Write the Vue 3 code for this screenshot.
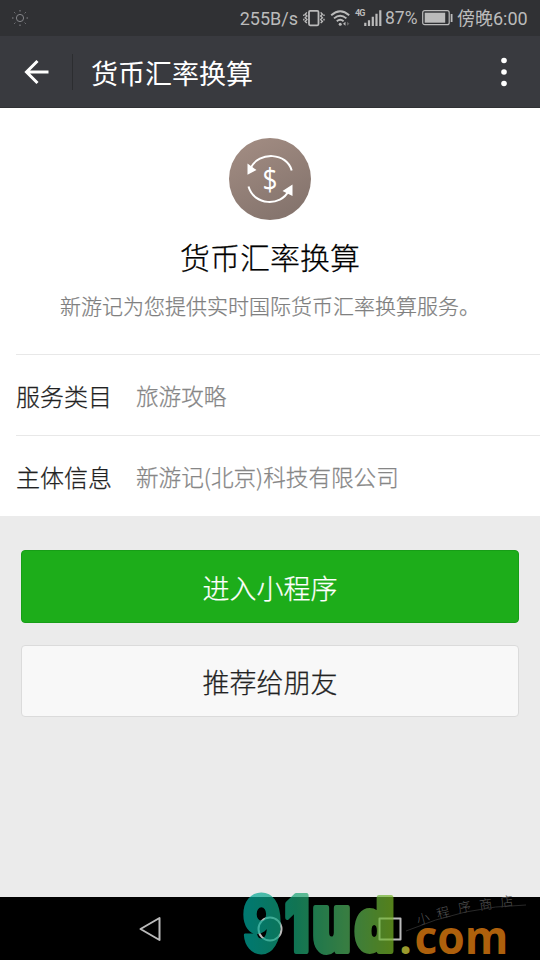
<script setup>
const rows = [
  { label: '服务类目', value: '旅游攻略' },
  { label: '主体信息', value: '新游记(北京)科技有限公司' },
]
</script>

<template>
  <div class="screen">
    <header class="status">
      <svg class="sun" width="18" height="18" viewBox="0 0 18 18">
        <circle cx="9" cy="9" r="3.6" />
        <path d="M9 1v1.5M9 15.5V17M1 9h1.5M15.5 9H17M3.3 3.3l1 1M13.7 13.7l1 1M3.3 14.7l1-1M13.7 4.3l1-1" />
      </svg>
      <span class="speed">255B/s</span>
      <svg class="vibrate" width="22" height="18" viewBox="0 0 22 18">
        <rect x="6" y="1.8" width="9.5" height="14.5" rx="1.2" stroke-width="1.8" />
        <path d="M3.9 3.4L2.2 5.3l1.7 1.7-1.7 1.8 1.7 1.8-1.7 1.8 1.7 1.7M.8 5.4v1.6M.8 9.8v1.6M17.7 3.4l1.7 1.9-1.7 1.7 1.7 1.8-1.7 1.8 1.7 1.8-1.7 1.7M21 5.4v1.6M21 9.8v1.6" stroke-width="1.4" />
      </svg>
      <svg class="wifi" width="21" height="18" viewBox="0 0 21 18">
        <path d="M1.2 6.2Q10.2-1.8 19.2 6.2M4 9.4Q10.2 4 16.4 9.4M6.8 12.3Q10.2 9.4 13.6 12.3" stroke-width="1.9" />
        <circle class="solid" cx="10.2" cy="15.3" r="1.5" />
        <path class="solid" d="M13 14.8l2.5-2v4z" />
        <path class="dim" d="M17 12.8l2.5 2-2.5 2z" />
      </svg>
      <span class="gen">4G</span>
      <svg class="signal" width="18" height="18" viewBox="0 0 18 18">
        <path d="M1.3 13.8V17M5 11.3V17M8.8 7.8V17M12.5 4.8V17M16.3 1.2V17" stroke-width="2.2" />
      </svg>
      <span class="percent">87%</span>
      <svg class="battery" width="31" height="16" viewBox="0 0 31 16">
        <rect x=".7" y=".7" width="26.5" height="14" rx="2" stroke-width="1.2" />
        <rect class="solid" x="2.7" y="2.7" width="20.5" height="10" />
        <path d="M29.6 4v8" stroke-width="1.8" />
      </svg>
      <span class="clock">傍晚6:00</span>
    </header>

    <nav class="bar">
      <svg class="back" width="26" height="26" viewBox="0 0 26 26">
        <path d="M24.5 13H2.5M13.5 2L2.5 13l11 11" />
      </svg>
      <i class="divider"></i>
      <h1>货币汇率换算</h1>
      <svg class="more" width="8" height="32" viewBox="0 0 8 32">
        <circle cx="4" cy="4.5" r="2.8" /><circle cx="4" cy="16" r="2.8" /><circle cx="4" cy="27.5" r="2.8" />
      </svg>
    </nav>

    <main>
      <section class="profile">
        <svg class="logo" width="82" height="82" viewBox="0 0 82 82">
          <defs>
            <linearGradient id="coin" x1="0" y1="0" x2=".5" y2="1">
              <stop offset="0" stop-color="#a48e84" /><stop offset="1" stop-color="#86756e" />
            </linearGradient>
          </defs>
          <circle cx="41" cy="41" r="41" fill="url(#coin)" />
          <path d="M62.7 32.5C58 14.5 30 13 21.5 30M19.5 48.5C25 68 52 68.5 59.5 53" fill="none" stroke="#fff" stroke-width="2" />
          <path d="M18.5 25.5v11.2l9-4.7zM63.5 46.5v11.5l-10-5z" fill="#fff" />
          <text x="33.5" y="52" textLength="15" lengthAdjust="spacingAndGlyphs">$</text>
        </svg>
        <h2>货币汇率换算</h2>
        <p>新游记为您提供实时国际货币汇率换算服务。</p>
      </section>

      <dl>
        <div v-for="row in rows" :key="row.label" class="row">
          <dt>{{ row.label }}</dt>
          <dd>{{ row.value }}</dd>
        </div>
      </dl>
    </main>

    <section class="actions">
      <button class="primary">进入小程序</button>
      <button class="plain">推荐给朋友</button>
    </section>

    <footer class="keys">
      <svg width="24" height="26" viewBox="0 0 24 26"><path d="M21.5 2v22L2.5 13z" /></svg>
      <svg width="26" height="26" viewBox="0 0 26 26"><circle cx="13" cy="13" r="11.5" /></svg>
      <svg width="24" height="24" viewBox="0 0 24 24"><rect x="1.5" y="1.5" width="21" height="21" /></svg>
    </footer>

    <svg class="watermark" width="300" height="72" viewBox="240 888 300 72">
      <defs>
        <linearGradient id="brand" gradientUnits="userSpaceOnUse" x1="243" y1="0" x2="393" y2="0">
          <stop offset="0" stop-color="#00aaa0" /><stop offset=".35" stop-color="#18a475" />
          <stop offset=".7" stop-color="#50b15c" /><stop offset="1" stop-color="#78b526" />
        </linearGradient>
      </defs>
      <g class="brand">
        <text class="nine" x="242.5" y="951.5" textLength="39" lengthAdjust="spacingAndGlyphs" font-size="78">9</text>
        <text x="285" y="951" textLength="24" lengthAdjust="spacingAndGlyphs" font-size="75">1</text>
        <text x="312.5" y="950.5" textLength="38" lengthAdjust="spacingAndGlyphs" font-size="78">u</text>
        <text x="355" y="950.5" textLength="39" lengthAdjust="spacingAndGlyphs" font-size="73">d</text>
      </g>
      <text class="com dot" x="399" y="953.5">.</text>
      <text class="com" x="414.5" y="953.5" textLength="94" lengthAdjust="spacingAndGlyphs">com</text>
      <g class="script">
        <text transform="translate(418 925) rotate(-15)">小</text>
        <text transform="translate(438 919) rotate(-14)">程</text>
        <text transform="translate(459 913) rotate(-12)">序</text>
        <text transform="translate(480 910) rotate(-8)">商</text>
        <text transform="translate(501 907) rotate(-8)">店</text>
      </g>
      <path d="M406 931Q465 906 526 905" fill="none" stroke="#343434" stroke-width=".8" />
    </svg>
  </div>
</template>

<style>
body { margin: 0; overflow: hidden; }
</style>

<style scoped>
.screen {
  position: relative;
  display: flex;
  flex-direction: column;
  width: 540px;
  height: 960px;
  overflow: hidden;
  background: #ebebeb;
  font-family: "Noto Sans CJK SC", sans-serif;
  font-weight: 300;
}
svg { display: block; flex: none; }
h1, h2, p, dl, dt, dd { margin: 0; font-weight: 300; }
h2, p, dt, dd, button { -webkit-text-stroke: .25px currentColor; }
.status {
  display: flex;
  align-items: center;
  box-sizing: border-box;
  height: 36px;
  padding: 0 12px 0 11px;
  background: #303134;
  color: #bbb;
  font-family: Roboto, "Noto Sans CJK SC", sans-serif;
  font-size: 18px;
  font-weight: 400;
  line-height: 37px;
  white-space: nowrap;
}
.status svg { fill: none; stroke: #bbb; }
.status .solid { fill: #bbb; stroke: none; }
.status .dim { fill: #666; stroke: none; }
.status .sun { stroke: #85868a; }
.speed { margin-left: auto; }
.vibrate { margin-left: 5px; }
.wifi { margin-left: 5px; }
.gen { align-self: flex-start; margin-left: 4px; width: 10px; font-size: 9px; font-weight: 700; line-height: 27px; letter-spacing: -.8px; }
.signal { margin-left: -1px; }
.percent { margin-left: 3px; width: 33px; font-size: 17.5px; }
.battery { margin-left: 4px; }
.clock { margin-left: 4px; width: 71px; }
.bar {
  display: flex;
  align-items: center;
  box-sizing: border-box;
  height: 72px;
  padding: 0 32px 0 24px;
  border-bottom: 1px solid #303134;
  background: #393a3f;
  color: #fff;
}
.back { fill: none; stroke: #fff; stroke-width: 3; }
.divider { width: 1px; height: 36px; margin: 0 18px 0 22px; background: #2c2d30; }
.bar h1 { padding-top: 2px; font-size: 27px; font-weight: 400; line-height: 40px; }
.more { margin-left: auto; fill: #fff; }
main { height: 408px; background: #fff; }
.profile {
  display: flex;
  flex-direction: column;
  align-items: center;
  box-sizing: border-box;
  height: 246px;
  padding-top: 30px;
}
.logo text { fill: #fff; font: 400 31px "Open Sans", sans-serif; }
.profile h2 { margin-top: 16px; color: #000; font-size: 30px; line-height: 40px; }
.profile p { margin-top: 14px; color: #808080; font-size: 21px; line-height: 30px; }
.row {
  display: flex;
  align-items: center;
  box-sizing: border-box;
  height: 81px;
  margin-left: 16px;
  border-top: 1px solid #e8e8e8;
}
dt { width: 120px; color: #222; font-size: 24px; }
dd { color: #868686; font-size: 22.6px; }
.actions { display: flex; flex-direction: column; gap: 22px; padding: 34px 21px 0; }
button {
  box-sizing: border-box;
  height: 73px;
  padding: 1px 0 0;
  border: 1px solid #179e17;
  border-radius: 4px;
  background: #1dad1a;
  color: #fff;
  font: 300 27px "Noto Sans CJK SC", sans-serif;
}
.plain { height: 72px; border-color: #dbdbdb; background: #f8f8f8; color: #222; }
.keys {
  display: flex;
  align-items: center;
  justify-content: center;
  gap: 95px;
  height: 63px;
  margin-top: auto;
  background: #000;
}
.keys svg { fill: none; stroke: #bbb; stroke-width: 2; stroke-linejoin: round; }
.watermark { position: absolute; right: 0; bottom: 0; }
.brand { opacity: .71; fill: url(#brand); stroke: url(#brand); stroke-width: 6; stroke-linejoin: round; font-family: Inter, sans-serif; font-weight: 900; }
.nine { stroke-width: 3; }
.com { fill: #ae600c; font: 700 46px "Open Sans", sans-serif; }
.dot { fill: #9b9b2d; }
.script { fill: #555; font: 300 13px "Noto Sans CJK SC", sans-serif; }
</style>
